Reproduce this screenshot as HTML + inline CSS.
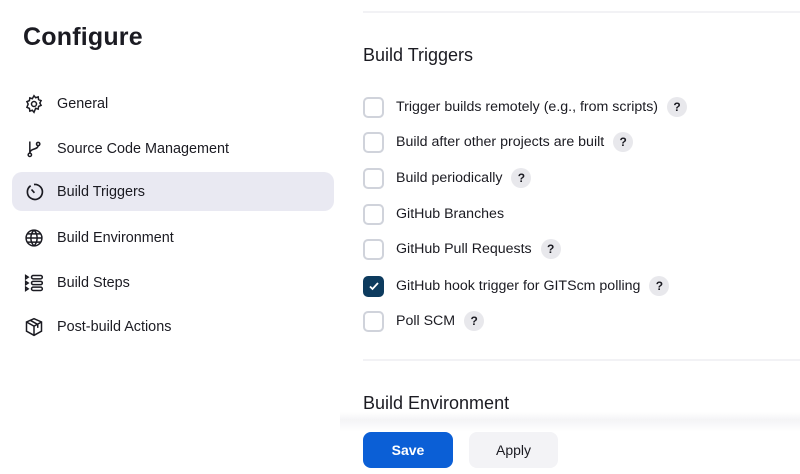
<!DOCTYPE html>
<html><head><style>
*{margin:0;padding:0;box-sizing:border-box}
body{width:800px;height:474px;overflow:hidden;background:#fff;font-family:"Liberation Sans",sans-serif;color:#1b1b22;position:relative}
.h1{position:absolute;left:23px;top:23px;font-size:25px;font-weight:bold;letter-spacing:0.2px}
.nav{position:absolute;left:12px;width:322px;height:39px;display:flex;align-items:center;font-size:14.4px;border-radius:10px}
.nav.sel{background:#e9e9f2}
.nav svg{position:absolute;left:12px;width:20px;height:20px}
.nav span{position:absolute;left:45px}
.line{position:absolute;left:363px;right:0;height:2px;background:#f2f2f5}
.h2{position:absolute;left:363px;font-size:18px}
.row{position:absolute;left:363px;display:flex;align-items:center;font-size:14.2px;height:22px}
.cb{width:21px;height:21px;border:2px solid #d0d3db;border-radius:5px;margin-right:12px;background:#fff}
.cb.on{background:#0d3b5e;border-color:#0d3b5e;display:flex;align-items:center;justify-content:center}
.q{width:20px;height:20px;border-radius:50%;background:#e8e8ec;font-size:12px;font-weight:bold;display:inline-flex;align-items:center;justify-content:center;margin-left:9px}
.bar{position:absolute;left:340px;right:0;top:412px;bottom:0;background:linear-gradient(#ffffff00,#f4f4f6 8px,#fff 20px)}
.btn{position:absolute;top:432px;height:36px;border-radius:8px;font-size:14px;display:flex;align-items:center;justify-content:center}
</style></head><body>
<div class="h1">Configure</div>
<div class="nav" style="top:84px"><svg viewBox="0 0 24 24" fill="none" stroke="#1b1b22" stroke-width="1.8"><circle cx="12" cy="12" r="3"/><path d="M12 2l2 2.5 3-1 .5 3.2 3 1.3-1.5 2.8 1.5 2.8-3 1.3-.5 3.2-3-1L12 22l-2-2.5-3 1-.5-3.2-3-1.3L5 12 3.5 9.2l3-1.3L7 4.7l3 1z"/></svg><span>General</span></div>
<div class="nav" style="top:129px"><svg viewBox="0 0 24 24" fill="none" stroke="#1b1b22" stroke-width="1.8"><circle cx="7" cy="19" r="2"/><circle cx="17" cy="6" r="2"/><path d="M7 17V3M17 8c0 5-10 3-10 9"/></svg><span>Source Code Management</span></div>
<div class="nav sel" style="top:172px"><svg viewBox="0 0 24 24" fill="none" stroke="#1b1b22" stroke-width="2"><path d="M8 4.5A9 9 0 1 0 12 3"/><path d="M9 9l3.5 4"/></svg><span>Build Triggers</span></div>
<div class="nav" style="top:218px"><svg viewBox="0 0 24 24" fill="none" stroke="#1b1b22" stroke-width="1.8"><circle cx="12" cy="12" r="9.5"/><path d="M2.5 12h19M12 2.5c-5 5-5 14 0 19M12 2.5c5 5 5 14 0 19M4 7h16M4 17h16"/></svg><span>Build Environment</span></div>
<div class="nav" style="top:263px"><svg viewBox="0 0 24 24" fill="none" stroke="#1b1b22" stroke-width="1.8"><rect x="9" y="3" width="13" height="4" rx="2"/><rect x="9" y="10" width="13" height="4" rx="2"/><rect x="9" y="17" width="13" height="4" rx="2"/><path d="M2 3l3 2-3 2zM2 10l3 2-3 2zM2 17l3 2-3 2z"/></svg><span>Build Steps</span></div>
<div class="nav" style="top:307px"><svg viewBox="0 0 24 24" fill="none" stroke="#1b1b22" stroke-width="1.8"><path d="M12 2l9 4v11l-9 5-9-5V6z"/><path d="M3 6l9 5 9-5M12 11v11M7.5 4l9 5v4"/></svg><span>Post-build Actions</span></div>

<div class="line" style="top:11px"></div>
<div class="h2" style="top:45px">Build Triggers</div>
<div class="row" style="top:96px"><div class="cb"></div>Trigger builds remotely (e.g., from scripts)<span class="q">?</span></div>
<div class="row" style="top:131px"><div class="cb"></div>Build after other projects are built<span class="q">?</span></div>
<div class="row" style="top:167px"><div class="cb"></div>Build periodically<span class="q">?</span></div>
<div class="row" style="top:203px"><div class="cb"></div>GitHub Branches</div>
<div class="row" style="top:238px"><div class="cb"></div>GitHub Pull Requests<span class="q">?</span></div>
<div class="row" style="top:275px"><div class="cb on"><svg width="12" height="12" viewBox="0 0 12 12" fill="none" stroke="#fff" stroke-width="1.8"><path d="M2 6.5l2.5 2.5 5.5-6"/></svg></div>GitHub hook trigger for GITScm polling<span class="q">?</span></div>
<div class="row" style="top:310px"><div class="cb"></div>Poll SCM<span class="q">?</span></div>
<div class="line" style="top:359px"></div>
<div class="h2" style="top:393px">Build Environment</div>
<div class="bar"></div>
<div class="btn" style="left:363px;width:90px;background:#0b5fd6;color:#fff;font-weight:bold">Save</div>
<div class="btn" style="left:469px;width:89px;background:#f3f3f6;color:#1b1b22">Apply</div>
</body></html>
